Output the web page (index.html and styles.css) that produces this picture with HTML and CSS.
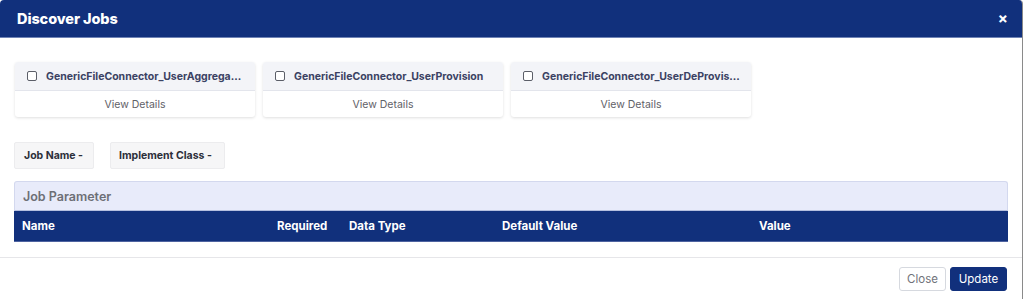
FILE: index.html
```html
<!DOCTYPE html>
<html>
<head>
<meta charset="utf-8">
<link rel="stylesheet" href="styles.css">
</head>
<body>
<div class="modal">
  <div class="modal-header">
    <span class="modal-title">Discover Jobs</span>
    <span class="close-x">&#215;</span>
  </div>
  <div class="modal-body">
    <div class="cards">
      <div class="card">
        <div class="card-head"><span class="cb"></span><span class="card-name">GenericFileConnector_UserAggrega...</span></div>
        <div class="card-foot">View Details</div>
      </div>
      <div class="card">
        <div class="card-head"><span class="cb"></span><span class="card-name">GenericFileConnector_UserProvision</span></div>
        <div class="card-foot">View Details</div>
      </div>
      <div class="card">
        <div class="card-head"><span class="cb"></span><span class="card-name">GenericFileConnector_UserDeProvis...</span></div>
        <div class="card-foot">View Details</div>
      </div>
    </div>
    <div class="tags">
      <span class="tag tag-job">Job Name -</span>
      <span class="tag tag-class">Implement Class -</span>
    </div>
    <div class="panel">
      <div class="panel-title">Job Parameter</div>
      <table class="params">
        <thead>
          <tr>
            <th class="c-name">Name</th>
            <th class="c-req">Required</th>
            <th class="c-type">Data Type</th>
            <th class="c-def">Default Value</th>
            <th class="c-val">Value</th>
          </tr>
        </thead>
      </table>
    </div>
  </div>
  <div class="modal-footer">
    <button class="btn btn-light">Close</button>
    <button class="btn btn-primary">Update</button>
  </div>
</div>
</body>
</html>
```
FILE: styles.css
```css
* { box-sizing: border-box; }
html, body { margin: 0; padding: 0; background: #fff; }
body { font-family: "Inter", "Liberation Sans", sans-serif; }

.modal {
  width: 1023px;
  height: 299px;
  border-right: 1px solid #8a8a8a;
  border-radius: 4px 4px 0 0;
  background: #fff;
  overflow: hidden;
}

.modal-header {
  height: 38px;
  background: #11307c;
  border-bottom: 1px solid #6f83b5;
  display: flex;
  align-items: center;
  justify-content: space-between;
  padding: 0 14px 0 17px;
  color: #fff;
}
.modal-title { font-size: 14.5px; font-weight: 800; letter-spacing: -0.1px; }
.close-x { font-size: 15px; font-weight: 700; line-height: 1; }

.modal-body { padding: 24px 14px 15px 14px; }

.cards { display: flex; gap: 8px; padding-left: 1px; }
.card {
  width: 240px;
  border-radius: 3px;
  box-shadow: 0 1px 3px rgba(0,0,0,0.13);
  background: #fff;
}
.card-head {
  height: 29px;
  background: #f3f4f8;
  border-bottom: 1px solid #e3e5ec;
  border-radius: 3px 3px 0 0;
  display: flex;
  align-items: center;
  padding-left: 12px;
  gap: 9px;
}
.cb {
  width: 10px; height: 10px;
  border: 1px solid #5b5e68;
  border-radius: 2px;
  background: #fff;
  flex: none;
}
.card-name {
  font-size: 10.5px;
  font-weight: 700;
  color: #3b4263;
  white-space: nowrap;
}
.card-foot {
  height: 26px;
  display: flex;
  align-items: center;
  justify-content: center;
  font-size: 10.5px;
  color: #5f6167;
}

.tags { display: flex; gap: 16px; margin-top: 25px; }
.tag {
  height: 27px;
  display: flex;
  align-items: center;
  white-space: nowrap;
  background: #f6f6f7;
  border: 1px solid #ececee;
  border-radius: 2px;
  font-size: 10.5px;
  font-weight: 700;
  color: #2c2f3a;
}
.tag-job { width: 80px; padding-left: 9px; }
.tag-class { width: 115px; padding-left: 8px; }

.panel { margin-top: 12px; }
.panel-title {
  height: 30px;
  background: #e8ebfa;
  border: 1px solid #d3d8ee;
  border-bottom: 1px solid #b5bfdf;
  border-radius: 3px 3px 0 0;
  display: flex;
  align-items: center;
  padding-left: 8px;
  font-size: 12.5px;
  font-weight: 600;
  color: #6d6f76;
}
.params {
  width: 994px;
  border-collapse: collapse;
  table-layout: fixed;
}
.params th {
  height: 30px;
  background: #11307c;
  color: #fff;
  text-align: left;
  font-size: 11.5px;
  font-weight: 700;
  padding: 0 0 0 8px;
  border-bottom: 1px solid #4e63a0;
}
.c-name { width: 255px; }
.c-req { width: 72px; }
.c-type { width: 153px; }
.c-def { width: 257px; }
.c-val { width: 257px; }

.modal-footer {
  border-top: 1px solid #e6e6e9;
  display: flex;
  justify-content: flex-end;
  gap: 4px;
  padding: 9px 15px 0 0;
}
.btn {
  height: 24px;
  font-family: inherit;
  font-size: 11.5px;
  border-radius: 3px;
  padding: 0 7px;
  cursor: pointer;
}
.btn-light { background: #fff; border: 1px solid #d6d9df; color: #707279; width: 47px; }
.btn-primary { background: #11307c; border: 1px solid #11307c; color: #fff; width: 57px; }
```
